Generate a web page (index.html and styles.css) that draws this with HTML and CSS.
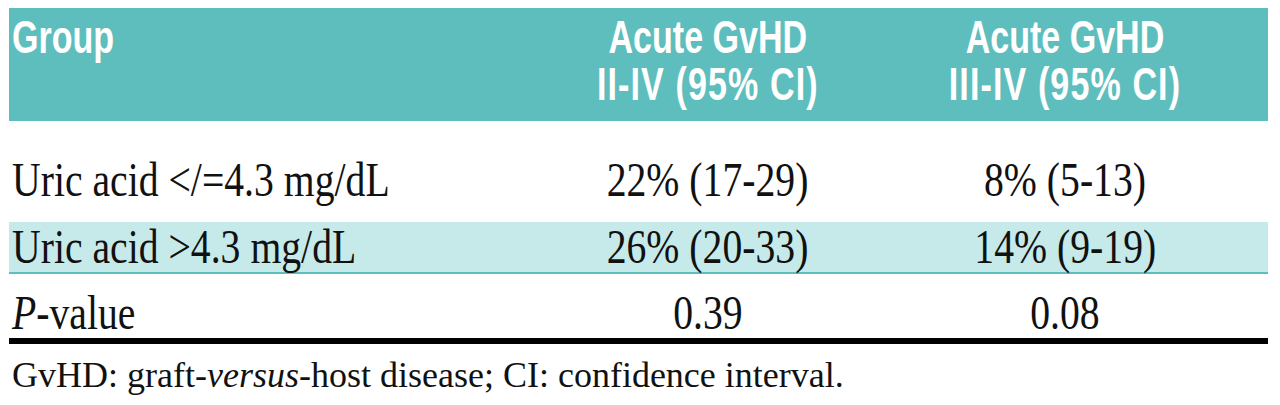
FILE: index.html
```html
<!DOCTYPE html>
<html lang="en">
<head>
<meta charset="utf-8">
<title>Acute GvHD by uric acid</title>
<link rel="stylesheet" href="styles.css">
</head>
<body>
<div class="table">
  <div class="row head">
    <div class="cell first"><span class="hx left">Group</span></div>
    <div class="cell mid"><span class="hx">Acute GvHD<br><span class="wide">II-IV (95% CI)</span></span></div>
    <div class="cell last"><span class="hx">Acute GvHD<br><span class="wide">III-IV (95% CI)</span></span></div>
  </div>
  <div class="row r1">
    <div class="cell first"><span class="sx left">Uric acid &lt;/=4.3 mg/dL</span></div>
    <div class="cell mid"><span class="sx">22% (17-29)</span></div>
    <div class="cell last"><span class="sx">8% (5-13)</span></div>
  </div>
  <div class="row r2">
    <div class="cell first"><span class="sx left">Uric acid &gt;4.3 mg/dL</span></div>
    <div class="cell mid"><span class="sx">26% (20-33)</span></div>
    <div class="cell last"><span class="sx">14% (9-19)</span></div>
  </div>
  <div class="row r3">
    <div class="cell first"><span class="sx left"><i>P</i>-value</span></div>
    <div class="cell mid"><span class="sx">0.39</span></div>
    <div class="cell last"><span class="sx">0.08</span></div>
  </div>
</div>
<p class="note">GvHD: graft-<i>versus</i>-host disease; CI: confidence interval.</p>
</body>
</html>
```

FILE: styles.css
```css
html, body {
  margin: 0;
  padding: 0;
  background: #ffffff;
}

body {
  padding: 8px 12px 0 9px;
  font-family: "Liberation Serif", "Times New Roman", serif;
  color: #111;
}

.table {
  width: 1259px;
}

.row {
  display: grid;
  grid-template-columns: 521px 356px 382px;
}

.cell {
  white-space: nowrap;
}

.cell.first {
  padding-left: 3px;
  text-align: left;
}

.cell.mid {
  text-align: center;
}

.cell.last {
  text-align: center;
  padding-right: 24px;
}

/* header */
.head {
  background: #5ebebd;
  color: #ffffff;
  padding: 6px 0 13px;
}

.hx {
  display: inline-block;
  font-family: "Liberation Sans", Arial, sans-serif;
  font-weight: bold;
  font-size: 46px;
  line-height: 47px;
  transform: scaleX(0.74);
  transform-origin: center center;
}

.wide {
  letter-spacing: 1.5px;
}

/* body rows */
.sx {
  display: inline-block;
  font-size: 49px;
  line-height: 50px;
  transform: scaleX(0.81);
  transform-origin: center center;
}

.left {
  transform-origin: left center;
}

.r1 {
  padding: 34px 0 17px;
}

.r2 {
  background: #c6eaea;
  border-bottom: 2px solid #5ebebd;
}

.r3 {
  padding-top: 14px;
  border-bottom: 6px solid #000000;
}

.note {
  margin: 11px 0 0 3px;
  font-size: 36px;
  line-height: 40px;
  color: #111;
}
```
